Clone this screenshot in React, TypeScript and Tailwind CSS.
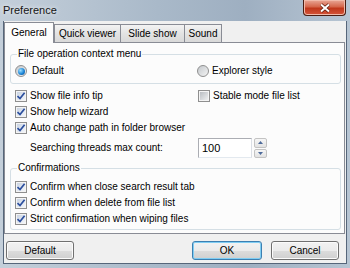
import type { ReactNode } from 'react';

function CheckBox({ checked }: { checked: boolean }) {
	return (
		<span className="flex h-[12px] w-[12px] shrink-0 border border-[#8f8f8f] bg-[#f4f4f4] p-[1px]">
			<span
				className={
					checked
						? 'flex flex-1 items-center justify-center bg-[linear-gradient(135deg,#c9d3e2,#f3f6fa)]'
						: 'flex flex-1 bg-[linear-gradient(135deg,#b9bdc2,#eeeff0)]'
				}
			>
				{checked && (
					<svg width="10" height="10" viewBox="0 0 10 10" className="-m-[1px]">
						<path d="M1.5 5.2 L4 7.6 L8.6 1.8" fill="none" stroke="#2c4f9e" strokeWidth="1.7" />
					</svg>
				)}
			</span>
		</span>
	);
}

function Radio({ checked }: { checked: boolean }) {
	return (
		<span className="flex h-[12px] w-[12px] shrink-0 items-center justify-center rounded-full border border-[#8f8f8f] bg-[linear-gradient(135deg,#c4c8cc,#f4f4f4)]">
			{checked && (
				<span className="h-[7px] w-[7px] rounded-full bg-[radial-gradient(circle_at_35%_35%,#9fe0ff,#1c86d8_55%,#0b3f7e)]" />
			)}
		</span>
	);
}

function Check({ checked, children, h = 'h-[16px]' }: { checked: boolean; children: ReactNode; h?: string }) {
	return (
		<div className={`flex items-center gap-[3px] ${h}`}>
			<CheckBox checked={checked} />
			<span>{children}</span>
		</div>
	);
}

function Group({ title, className, children }: { title: string; className: string; children: ReactNode }) {
	return (
		<div className={`flex flex-col rounded-[3px] border border-[#d5dfe5] px-[4px] ${className}`}>
			<span className="-mt-[7px] ml-[2px] self-start bg-[#fcfcfc] px-[1px] leading-[12px]">{title}</span>
			{children}
		</div>
	);
}

function Tab({ label, active, width, first }: { label: string; active?: boolean; width: string; first?: boolean }) {
	if (active) {
		return (
			<div className={`relative z-10 mb-[-1px] flex h-[21px] items-center justify-center border border-b-0 border-[#898c95] bg-[#fcfcfc] pb-[1px] ${width}`}>
				{label}
			</div>
		);
	}
	return (
		<div
			className={`flex h-[18px] items-center justify-center border border-b-0 border-[#898c95] bg-[linear-gradient(#f3f3f3,#e3e3e3_50%,#d9d9d9)] ${width} ${first ? '' : '-ml-px'}`}
		>
			{label}
		</div>
	);
}

function Button({ label, focused, width }: { label: string; focused?: boolean; width: string }) {
	return (
		<button
			className={`flex h-[19px] items-center justify-center rounded-[3px] border bg-[linear-gradient(#f2f2f2_0%,#ebebeb_50%,#dddddd_50%,#cfcfcf_100%)] ${width} ${
				focused
					? 'border-[#3c7fb1] shadow-[inset_0_0_0_1px_#7fcdf3]'
					: 'border-[#707070] shadow-[inset_0_0_0_1px_#fbfbfb]'
			}`}
		>
			{label}
		</button>
	);
}

export default function App() {
	return (
		<div className="flex h-[268px] w-[350px] flex-col overflow-hidden bg-[linear-gradient(90deg,#c4cfda,#a9b9c9_45%,#9eafc1_70%,#b7c5d3)] font-['Liberation_Sans',Arial,sans-serif] text-[10px] leading-[12px] text-black">
			{/* title bar */}
			<div className="flex h-[21px] shrink-0 items-start">
				<span className="pl-[3px] pt-[4px] text-[11px] leading-[13px] text-[#151515] [text-shadow:0_0_5px_#ffffff]">
					Preference
				</span>
				<div className="ml-auto mr-[4px] flex h-[16px] w-[43px] items-center justify-center rounded-b-[4px] border border-t-0 border-[#4a1d12] bg-[linear-gradient(#e9a796,#d5664b_45%,#c0371b_55%,#d4553a)] shadow-[inset_0_0_0_1px_#f1b9a9]">
					<svg width="12" height="10" viewBox="0 0 12 10">
						<path d="M2 1.5 L10 8.5 M10 1.5 L2 8.5" stroke="#5a1a0c" strokeWidth="3.4" />
						<path d="M2 1.5 L10 8.5 M10 1.5 L2 8.5" stroke="#ffffff" strokeWidth="2" />
					</svg>
				</div>
			</div>

			{/* client area */}
			<div className="mx-[3px] flex h-[243px] shrink-0 flex-col border border-t-0 border-[#56667a] bg-[#f0f0f0] pt-[1px]">
				<div className="flex h-[20px] items-end">
					<Tab label="General" active width="w-[50px]" />
					<Tab label="Quick viewer" width="w-[67px]" first />
					<Tab label="Slide show" width="w-[65px]" />
					<Tab label="Sound" width="w-[38px]" />
				</div>

				<div className="mr-[1px] flex h-[192px] flex-col border border-[#898c95] bg-[#fcfcfc] pl-[5px] pr-[3px]">
					<Group title="File operation context menu" className="mt-[11px] pb-[5px]">
						<div className="mt-[4px] flex h-[14px] items-center">
							<div className="flex w-[182px] items-center gap-[5px]">
								<Radio checked />
								<span>Default</span>
							</div>
							<div className="flex items-center gap-[3px]">
								<Radio checked={false} />
								<span>Explorer style</span>
							</div>
						</div>
					</Group>

					<div className="mt-[3px] flex flex-col pl-[5px]">
						<div className="flex">
							<div className="w-[183px]">
								<Check checked h="h-[17px]">Show file info tip</Check>
							</div>
							<Check checked={false} h="h-[17px]">Stable mode file list</Check>
						</div>
						<Check checked>Show help wizard</Check>
						<Check checked>Auto change path in folder browser</Check>
						<div className="mt-[2px] flex h-[20px] items-center">
							<span className="w-[183px] pl-[15px]">Searching threads max count:</span>
							<div className="flex h-[20px] w-[54px] items-center border border-[#abadb3] border-b-[#e3e9ef] border-r-[#dbdfe6] bg-white pl-[3px] text-[11px]">
								100
							</div>
							<div className="ml-[2px] flex h-[20px] w-[13px] flex-col gap-[1px]">
								<div className="flex flex-1 items-center justify-center rounded-[2px] border border-[#c3c3c3] bg-[linear-gradient(#f6f6f6,#e2e2e2)]">
									<svg width="5" height="3" viewBox="0 0 5 3">
										<path d="M0 3 L2.5 0 L5 3 Z" fill="#4d6a9a" />
									</svg>
								</div>
								<div className="flex flex-1 items-center justify-center rounded-[2px] border border-[#c3c3c3] bg-[linear-gradient(#f6f6f6,#e2e2e2)]">
									<svg width="5" height="3" viewBox="0 0 5 3">
										<path d="M0 0 L2.5 3 L5 0 Z" fill="#4d6a9a" />
									</svg>
								</div>
							</div>
						</div>
					</div>

					<Group title="Confirmations" className="mt-[10px] pb-[2px]">
						<div className="mt-[5px] flex flex-col">
							<Check checked>Confirm when close search result tab</Check>
							<Check checked>Confirm when delete from file list</Check>
							<Check checked>Strict confirmation when wiping files</Check>
						</div>
					</Group>
				</div>

				<div className="mt-[7px] flex pl-[2px] pr-[7px]">
					<Button label="Default" width="w-[68px]" />
					<div className="ml-auto flex gap-[9px]">
						<Button label="OK" focused width="w-[70px]" />
						<Button label="Cancel" width="w-[68px]" />
					</div>
				</div>
			</div>
		</div>
	);
}
